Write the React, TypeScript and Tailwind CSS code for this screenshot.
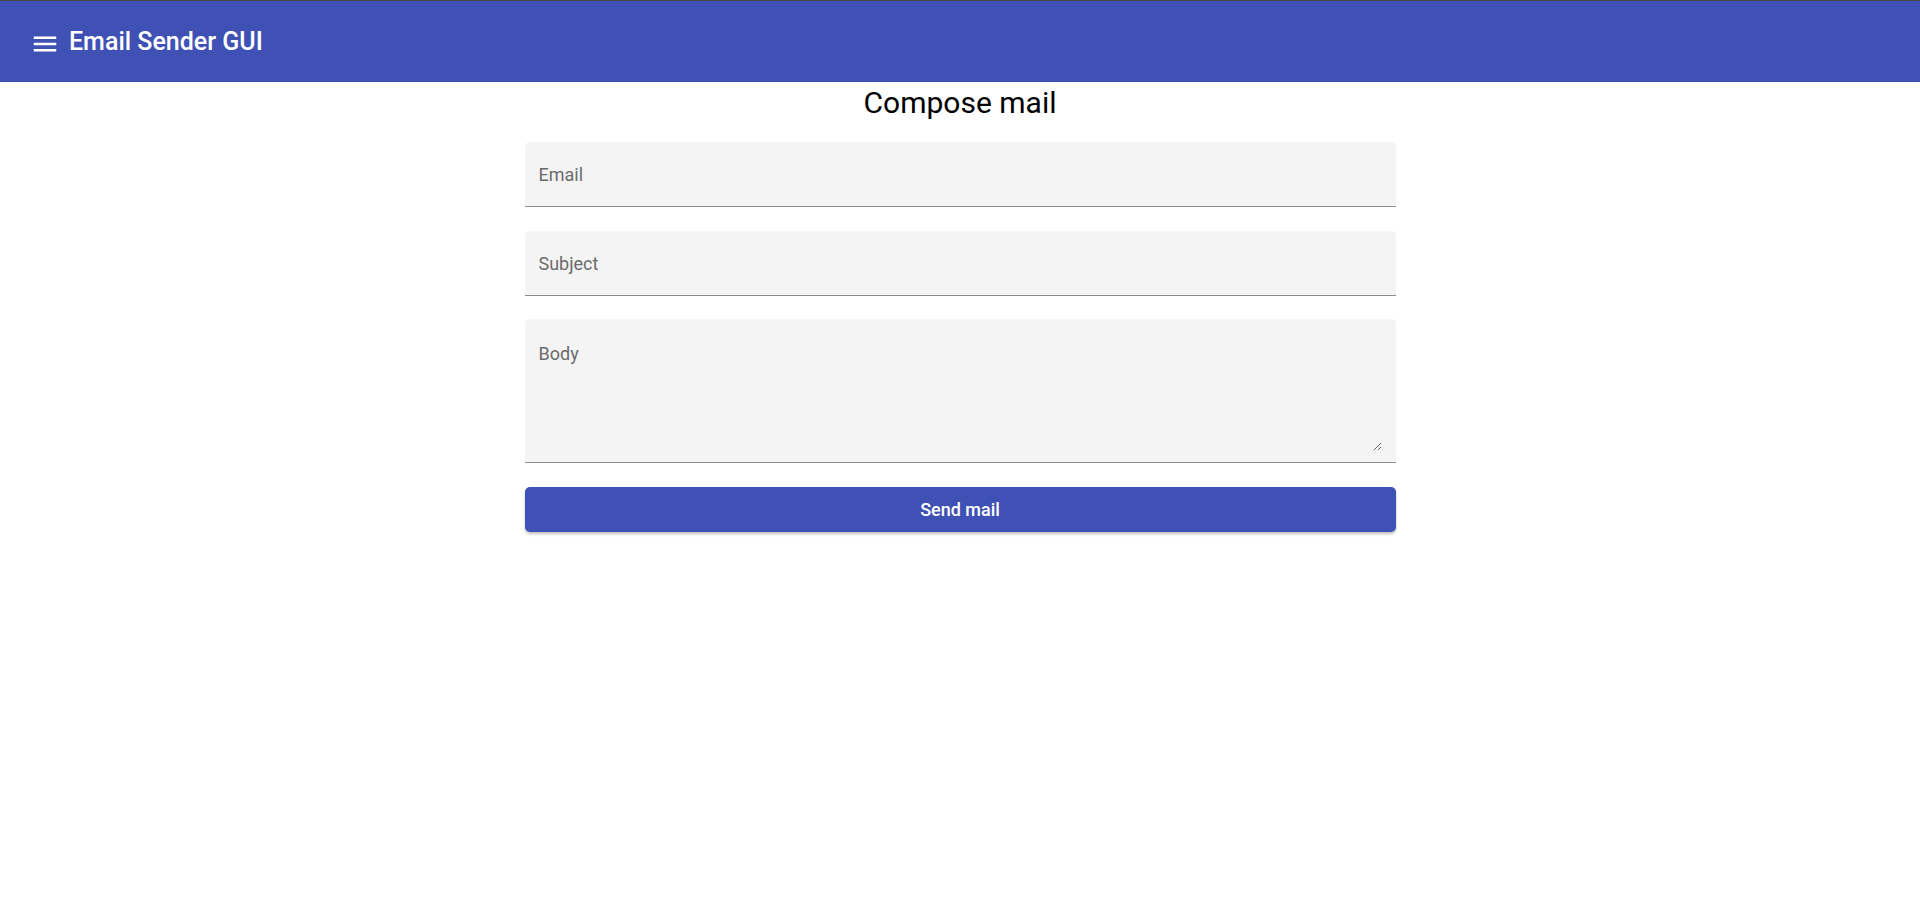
import { useState } from 'react';

function MenuIcon() {
  return (
    <svg viewBox="0 0 24 24" className="w-[30px] h-[30px] fill-white" aria-hidden="true">
      <path d="M3 18h18v-2H3v2zm0-5h18v-2H3v2zm0-7v2h18V6H3z" />
    </svg>
  );
}

export default function App() {
  const [email, setEmail] = useState('');
  const [subject, setSubject] = useState('');
  const [body, setBody] = useState('');

  const fieldClass =
    'w-full bg-[#f4f4f4] rounded-t-[5px] border-b border-[#8c8c8c] px-[14px] text-[18px] leading-[21px] text-[#222] placeholder:text-[#6b6b6b] outline-none';

  return (
    <div className="min-h-screen bg-white font-['Roboto',sans-serif]">
      <header className="h-[82px] border-t border-[#444] bg-[#3f51b5] flex items-center px-[30px]">
        <button className="mt-[5px]" aria-label="Open menu">
          <MenuIcon />
        </button>
        <h1 className="ml-[9px] text-[25px] font-medium text-white">Email Sender GUI</h1>
      </header>

      <main className="w-[871px] mx-auto flex flex-col">
        <h2 className="mt-[3px] text-center text-[30px] leading-[35px] text-black">Compose mail</h2>

        <input
          className={`${fieldClass} mt-[22px] h-[65px]`}
          placeholder="Email"
          value={email}
          onChange={(e) => setEmail(e.target.value)}
        />
        <input
          className={`${fieldClass} mt-[24px] h-[65px]`}
          placeholder="Subject"
          value={subject}
          onChange={(e) => setSubject(e.target.value)}
        />
        <div className="mt-[23px] bg-[#f4f4f4] rounded-t-[5px] border-b border-[#8c8c8c] pl-[14px] pr-[14px] pt-[24px] pb-[11px]">
          <textarea
            className="block w-full h-[108px] bg-transparent resize-y text-[18px] leading-[21px] text-[#222] placeholder:text-[#6b6b6b] outline-none"
            placeholder="Body"
            value={body}
            onChange={(e) => setBody(e.target.value)}
          />
        </div>

        <button className="mt-[24px] h-[45px] rounded-[5px] bg-[#3f51b5] text-white text-[18px] font-medium shadow-[0_2px_3px_rgba(0,0,0,0.25)]">
          Send mail
        </button>
      </main>
    </div>
  );
}
